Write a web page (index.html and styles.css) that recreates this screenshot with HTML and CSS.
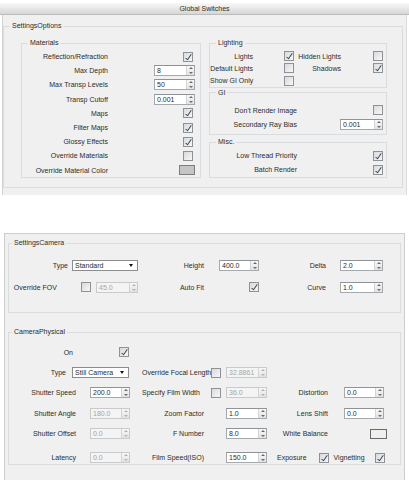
FILE: index.html
```html
<!DOCTYPE html>
<html lang="en">
<head>
    <meta charset="UTF-8">
    <meta name="viewport" content="width=device-width, initial-scale=1.0">
    <title>Global Switches</title>
    <link rel="stylesheet" href="styles.css">
</head>
<body>
    <div class="titlebar">Global Switches</div>

    <!-- Options rollout -->
    <div class="rollout rollout-options">
        <fieldset class="group group-main">
            <legend>SettingsOptions</legend>
            <div class="options-cols">
                <fieldset class="group">
                    <legend>Materials</legend>
                    <div class="mat-rows">
                        <span class="lbl">Reflection/Refraction</span><span class="check on"></span>
                        <span class="lbl">Max Depth</span><span class="spinner w41"><span class="val">8</span><span class="spin"></span></span>
                        <span class="lbl">Max Transp Levels</span><span class="spinner w41"><span class="val">50</span><span class="spin"></span></span>
                        <span class="lbl">Transp Cutoff</span><span class="spinner w41"><span class="val">0.001</span><span class="spin"></span></span>
                        <span class="lbl">Maps</span><span class="check on"></span>
                        <span class="lbl">Filter Maps</span><span class="check on"></span>
                        <span class="lbl">Glossy Effects</span><span class="check on"></span>
                        <span class="lbl">Override Materials</span><span class="check"></span>
                        <span class="lbl">Override Material Color</span><span class="swatch"></span>
                    </div>
                </fieldset>

                <div class="options-right">
                    <fieldset class="group">
                        <legend>Lighting</legend>
                        <div class="light-rows">
                            <span class="lbl">Lights</span><span class="check on"></span>
                            <span class="lbl">Hidden Lights</span><span class="check"></span>
                            <span class="lbl">Default Lights</span><span class="check"></span>
                            <span class="lbl">Shadows</span><span class="check on"></span>
                            <span class="lbl">Show GI Only</span><span class="check"></span>
                        </div>
                    </fieldset>
                    <fieldset class="group">
                        <legend>GI</legend>
                        <div class="side-rows gi-rows">
                            <span class="lbl">Don't Render Image</span><span class="check"></span>
                            <span class="lbl">Secondary Ray Bias</span><span class="spinner w43"><span class="val">0.001</span><span class="spin"></span></span>
                        </div>
                    </fieldset>
                    <fieldset class="group group-misc">
                        <legend>Misc.</legend>
                        <div class="side-rows misc-rows">
                            <span class="lbl">Low Thread Priority</span><span class="check on"></span>
                            <span class="lbl">Batch Render</span><span class="check on"></span>
                        </div>
                    </fieldset>
                </div>
            </div>
        </fieldset>
    </div>

    <!-- Camera rollout -->
    <div class="rollout rollout-camera">
        <fieldset class="group group-cam">
            <legend>SettingsCamera</legend>
            <div class="cam-rows">
                <span class="lbl">Type</span>
                <span class="combo w66">Standard<span class="arrow"></span></span>
                <span class="lbl">Height</span>
                <span class="spinner w40"><span class="val">400.0</span><span class="spin"></span></span>
                <span class="lbl pr4">Delta</span>
                <span class="spinner w43"><span class="val">2.0</span><span class="spin"></span></span>

                <span class="lbl pr13">Override FOV</span>
                <span class="fov"><span class="check"></span><span class="spinner w42 off"><span class="val">45.0</span><span class="spin"></span></span></span>
                <span class="lbl">Auto Fit</span>
                <span class="check on"></span>
                <span class="lbl pr4">Curve</span>
                <span class="spinner w43"><span class="val">1.0</span><span class="spin"></span></span>
            </div>
        </fieldset>

        <fieldset class="group group-cam group-phys">
            <legend>CameraPhysical</legend>
            <div class="phys-rows">
                <span class="lbl pr7">On</span>
                <span class="check on mr2"></span>
                <span></span><span></span><span></span><span></span>

                <span class="type-cell"><span class="lbl">Type</span><span class="combo w57">Still Camera<span class="arrow"></span></span></span>
                <span class="lbl-left">Override Focal Length</span>
                <span class="pair"><span class="check"></span><span class="spinner w41 off"><span class="val">32.8861</span><span class="spin"></span></span></span>
                <span></span><span></span>

                <span class="lbl">Shutter Speed</span>
                <span class="spinner w40 mr1"><span class="val">200.0</span><span class="spin"></span></span>
                <span class="lbl-left">Specify Film Width</span>
                <span class="pair"><span class="check"></span><span class="spinner w41 off"><span class="val">36.0</span><span class="spin"></span></span></span>
                <span class="lbl">Distortion</span>
                <span class="spinner w40 mr3"><span class="val">0.0</span><span class="spin"></span></span>

                <span class="lbl">Shutter Angle</span>
                <span class="spinner w40 mr1 off"><span class="val">180.0</span><span class="spin"></span></span>
                <span class="lbl pr6">Zoom Factor</span>
                <span class="spinner w41"><span class="val">1.0</span><span class="spin"></span></span>
                <span class="lbl">Lens Shift</span>
                <span class="spinner w40 mr3"><span class="val">0.0</span><span class="spin"></span></span>

                <span class="lbl">Shutter Offset</span>
                <span class="spinner w40 mr1 off"><span class="val">0.0</span><span class="spin"></span></span>
                <span class="lbl pr6">F Number</span>
                <span class="spinner w41"><span class="val">8.0</span><span class="spin"></span></span>
                <span class="lbl">White Balance</span>
                <span class="swatch swatch-wb"></span>

                <span class="lbl last">Latency</span>
                <span class="spinner w40 mr1 off last"><span class="val">0.0</span><span class="spin"></span></span>
                <span class="lbl pr6 last">Film Speed(ISO)</span>
                <span class="spinner w41 last"><span class="val">150.0</span><span class="spin"></span></span>
                <span class="expo last"><span>Exposure</span><span class="check on"></span><span>Vignetting</span><span class="check on"></span></span>
            </div>
        </fieldset>
    </div>
</body>
</html>
```

FILE: styles.css
```css
* { box-sizing: border-box; }
body { margin: 0; padding-top: 3px; width: 409px; height: 480px; overflow: hidden; background: #fff; font-family: 'Liberation Sans', Tahoma, sans-serif; font-size: 7px; color: #2c2c2c; }

.titlebar { height: 12px; line-height: 11px; text-align: center; background: linear-gradient(#f8f8f8, #d6d6d6); border-bottom: 1px solid #bcbcbc; }

/* rollouts & group boxes */
.rollout { background: #f0f0f0; }
.rollout-options { margin: 0 2px; padding: 6px 3px 7px 0; border-left: 1px solid #d2d2d2; border-right: 1px solid #dcdcdc; }
.rollout-camera { margin: 38px 4px 0; height: 247px; padding: 4px 3px 0; border: 1px solid #cdcdcd; border-bottom: none; }

.group { margin: 0; padding: 0; min-width: 0; border: 1px solid #d9dde0; }
.group legend { margin-left: 1px; padding: 0 2px; line-height: 10px; }
.group-main legend { margin-left: 6px; }
.group-cam legend { margin-left: 3px; }

.lbl { text-align: right; white-space: nowrap; }
.lbl-left { padding-left: 11px; white-space: nowrap; }

/* options layout */
.options-cols { display: grid; grid-template-columns: 180px 178px; column-gap: 8px; padding: 7px 0 9px 17px; }
.options-right { display: flex; flex-direction: column; }
.group-misc { margin-top: 2px; }

.mat-rows { display: grid; grid-template-columns: 86px 1fr; grid-auto-rows: 14.2px; align-items: center; padding: 1.5px 5px 0 0; }
.mat-rows > :nth-child(even) { justify-self: end; }
.mat-rows .check { margin-right: 2px; }

.light-rows { display: grid; grid-template-columns: 43px 41px 47px 1fr; grid-auto-rows: 12.3px; align-items: center; padding: 2px 3px 0 0; }
.light-rows > :nth-child(even) { justify-self: end; }

.side-rows { display: grid; grid-template-columns: 87px 1fr; grid-auto-rows: 14px; align-items: center; padding-right: 3px; }
.side-rows > :nth-child(even) { justify-self: end; }
.gi-rows { padding-top: 5.5px; padding-bottom: 3px; }
.misc-rows { padding-top: 1.5px; }

/* camera layout */
.cam-rows { display: grid; grid-template-columns: 61px 70px 66px 53px 71px 53px; grid-auto-rows: 21.5px; align-items: center; padding: 7px 0 14px; }
.cam-rows .lbl { padding-right: 2px; }
.cam-rows .lbl.pr4 { padding-right: 4px; }
.cam-rows .lbl.pr13 { padding-right: 13px; }
.cam-rows > :nth-child(4), .cam-rows > :nth-child(6), .cam-rows > :nth-child(10), .cam-rows > :nth-child(12) { justify-self: end; }
.cam-rows .combo { margin-left: 2px; }
.fov { display: flex; align-items: center; gap: 5px; padding-left: 11px; }

.group-phys { margin-top: 14px; }
.phys-rows { display: grid; grid-template-columns: 71px 51px 79px 57px 65px 55px; grid-auto-rows: 20.3px; align-items: center; padding-top: 5px; }
.phys-rows .lbl { padding-right: 4px; }
.phys-rows .lbl.pr6 { padding-right: 6px; }
.phys-rows .lbl.pr7 { padding-right: 7px; }
.phys-rows .spinner, .phys-rows .check, .phys-rows .swatch { justify-self: end; }
.phys-rows .last { margin-top: 8px; }
.type-cell { grid-column: span 2; display: flex; justify-content: flex-end; align-items: center; gap: 6px; padding-right: 2px; }
.type-cell .lbl { padding-right: 0; }
.pair { display: flex; justify-content: space-between; align-items: center; padding-left: 1px; }
.expo { grid-column: span 2; display: flex; align-items: center; padding: 0 2px 0 10px; }
.expo .check:nth-child(2) { margin-left: 12px; margin-right: 5px; }
.expo .check:last-child { margin-left: auto; }
.mr1 { margin-right: 1px; }
.mr2 { margin-right: 2px; }
.mr3 { margin-right: 3px; }

/* controls */
.check { display: block; position: relative; width: 10px; height: 10px; border: 1px solid #8e9196; background: linear-gradient(135deg, #d9dadb, #f7f7f7); }
.check.on::after { content: ''; position: absolute; left: 3px; top: 0; width: 2px; height: 6px; border: solid #3a4658; border-width: 0 1px 1px 0; transform: rotate(35deg); }

.spinner { display: flex; width: 42px; height: 11px; border: 1px solid #a5a9ae; border-top-color: #8f9398; background: #fff; }
.spinner .val { flex: 1; padding-left: 2px; line-height: 9px; white-space: nowrap; overflow: hidden; }
.spinner .spin { position: relative; width: 8px; border-left: 1px solid #d4d4d4; background: linear-gradient(#f8f8f8, #e2e2e2); }
.spinner .spin::before, .spinner .spin::after { content: ''; position: absolute; left: 1.5px; border-left: 2px solid transparent; border-right: 2px solid transparent; }
.spinner .spin::before { top: 1px; border-bottom: 2px solid #6c6c6c; }
.spinner .spin::after { bottom: 1px; border-top: 2px solid #6c6c6c; }
.spinner.off { background: #f4f4f4; border-color: #cacaca; color: #a4a4a4; }
.spinner.off .spin::before { border-bottom-color: #b4b4b4; }
.spinner.off .spin::after { border-top-color: #b4b4b4; }
.w40 { width: 40px; }
.w41 { width: 41px; }
.w42 { width: 42px; }
.w43 { width: 43px; }

.combo { display: flex; align-items: center; height: 11px; padding-left: 2px; border: 1px solid #8c8c8c; background: #fff; white-space: nowrap; }
.combo .arrow { margin: 0 4px 0 auto; border-left: 2.5px solid transparent; border-right: 2.5px solid transparent; border-top: 3px solid #111; }
.w66 { width: 66px; }
.w57 { width: 57px; }

.swatch { display: block; width: 16px; height: 10px; border: 1px solid #7d7d7d; background: #c5c5c5; }
.swatch-wb { width: 17px; background: #eef0ee; border-color: #6a6a6a; }
```
